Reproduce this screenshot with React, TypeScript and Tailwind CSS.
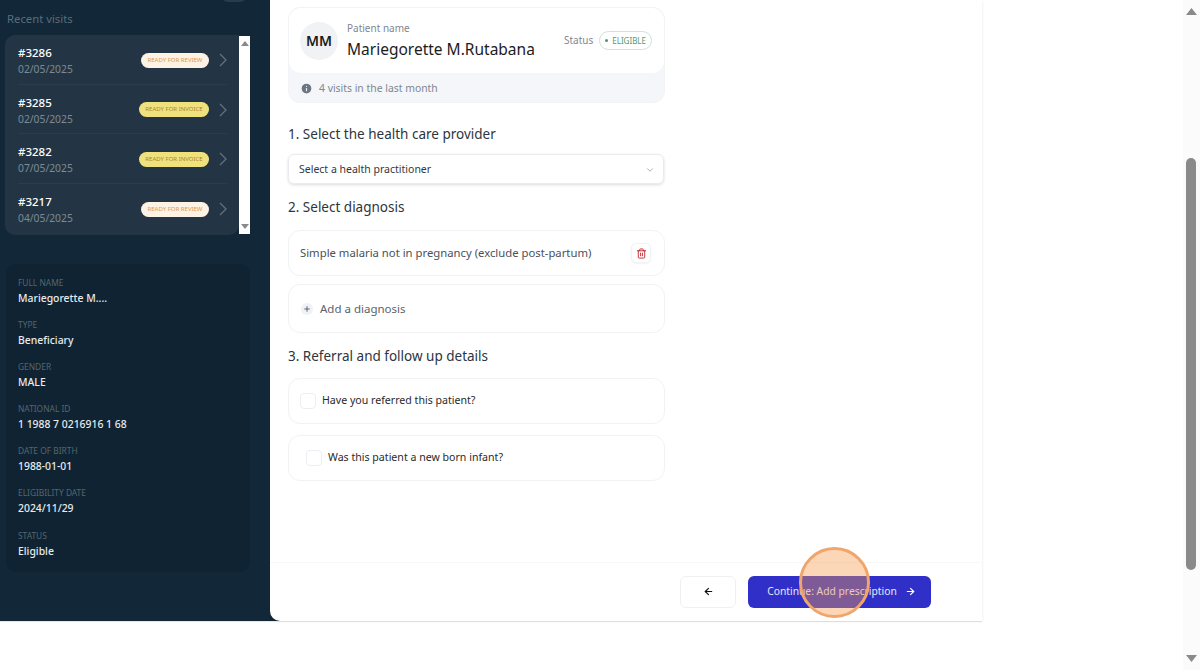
import React from "react";
import { ChevronDown, Info, Trash2, Plus, ArrowLeft, ArrowRight } from "lucide-react";

const visits = [
    { id: "#3286", date: "02/05/2025", status: "review" },
    { id: "#3285", date: "02/05/2025", status: "invoice" },
    { id: "#3282", date: "07/05/2025", status: "invoice" },
    { id: "#3217", date: "04/05/2025", status: "review" },
];

const details = [
    { label: "FULL NAME", value: "Mariegorette M...." },
    { label: "TYPE", value: "Beneficiary" },
    { label: "GENDER", value: "MALE" },
    { label: "NATIONAL ID", value: "1 1988 7 0216916 1 68" },
    { label: "DATE OF BIRTH", value: "1988-01-01" },
    { label: "ELIGIBILITY DATE", value: "2024/11/29" },
    { label: "STATUS", value: "Eligible" },
];

function Sidebar() {
    return (
        <aside className="relative h-full w-[272px] shrink-0 bg-[#122738] pl-[5px] pt-[11px]">
            {/* avatar edge peeking in from above */}
            <div className="absolute left-[222px] top-[-10px] h-[12px] w-[24px] rounded-full bg-[#2a3b49]" />

            <p className="ml-[2px] text-[11.3px] leading-[16px] text-[#5b6c7a]">Recent visits</p>

            {/* recent visits list */}
            <div className="mt-[8px] flex h-[200px] w-[245px]">
                <ul className="h-full w-[234px] rounded-l-[10px] rounded-br-[10px] bg-[#233544] pl-[13px] pr-[12px]">
                    {visits.map((v, i) => (
                        <li
                            key={v.id}
                            className={`flex h-[49.6px] items-center justify-between border-b ${i < 3 ? "border-[#2b3d4c]" : "border-transparent"}`}
                        >
                            <div className="pt-[4px]">
                                <p className="text-[11.5px] leading-[17px] font-medium text-white">{v.id}</p>
                                <p className="text-[10.3px] leading-[17px] text-[#7d8a95]">{v.date}</p>
                            </div>
                            <div className="flex items-center gap-[10px] pt-[2px]">
                                {v.status === "review" ? (
                                    <span className="flex h-[15px] w-[68px] items-center justify-center rounded-full bg-[#fdf2e3] text-[6px] text-[#dc9a45]">
                                        READY FOR REVIEW
                                    </span>
                                ) : (
                                    <span className="flex h-[15px] w-[70px] items-center justify-center rounded-full bg-[#efe27c] text-[6px] text-[#b0862a]">
                                        READY FOR INVOICE
                                    </span>
                                )}
                                <svg width="8" height="14" viewBox="0 0 8 14" fill="none" stroke="#5f707e" strokeWidth="1.3">
                                    <path d="M1 1l6 6-6 6" />
                                </svg>
                            </div>
                        </li>
                    ))}
                </ul>

                {/* list scrollbar */}
                <div className="mt-px flex h-[198px] w-[11px] flex-col items-center justify-between bg-white py-[5px]">
                    <div className="h-0 w-0 border-x-[4px] border-b-[5px] border-x-transparent border-b-[#8a8a8a]" />
                    <div className="h-0 w-0 border-x-[4px] border-t-[5px] border-x-transparent border-t-[#8a8a8a]" />
                </div>
            </div>

            {/* patient details */}
            <div className="ml-px mt-[29px] flex h-[308px] w-[244px] flex-col gap-[15.1px] rounded-[10px] bg-[#102332] px-[12px] pt-[13px]">
                {details.map((d) => (
                    <div key={d.label}>
                        <p className="text-[8.4px] leading-[12px] text-[#55666f]">{d.label}</p>
                        <p className="mt-[3px] text-[10.4px] leading-[12px] font-medium text-[#e6ebee]">{d.value}</p>
                    </div>
                ))}
            </div>
        </aside>
    );
}

function PatientCard() {
    return (
        <div className="h-[96px] rounded-[12px] border border-[#f1f3f6] bg-[#f4f6fa]">
            <div className="flex h-[65px] items-center rounded-[12px] bg-white pl-[11px] pr-[12px]">
                <div className="flex h-[38px] w-[38px] items-center justify-center rounded-full bg-[#f1f2f3] text-[14px] font-semibold text-[#1a1a1a]">
                    MM
                </div>
                <div className="ml-[9px]">
                    <p className="text-[10px] leading-[14px] text-[#7f8790]">Patient name</p>
                    <p className="mt-[3px] text-[15.5px] leading-[22px] text-[#1c1c1c]">Mariegorette M.Rutabana</p>
                </div>
                <div className="ml-auto flex items-center gap-[6px]">
                    <span className="text-[10px] text-[#7f8790]">Status</span>
                    <span className="flex h-[19px] items-center gap-[4px] rounded-full border border-[#cfe3d8] px-[5px] text-[8px] text-[#4f9d72]">
                        <span className="h-[3px] w-[3px] rounded-full bg-[#3f9d6c]" />
                        ELIGIBLE
                    </span>
                </div>
            </div>
            <div className="flex items-center gap-[6px] pl-[11px] pt-[8px]">
                <Info className="h-[13px] w-[13px] fill-[#6b7682] text-[#f4f6fa]" strokeWidth={2} />
                <span className="text-[10.4px] text-[#7f8790]">4 visits in the last month</span>
            </div>
        </div>
    );
}

function Heading({ children }: { children: React.ReactNode }) {
    return <h2 className="text-[13.5px] leading-[20px] text-[#2c3540]">{children}</h2>;
}

function Checkbox({ label, indent }: { label: string; indent?: boolean }) {
    return (
        <div className={`flex h-[46px] items-center gap-[6px] rounded-[12px] border border-[#f1f2f4] ${indent ? "pl-[17px]" : "pl-[11px]"}`}>
            <span className="h-[16px] w-[16px] rounded-[4px] border border-[#eceef1]" />
            <span className="text-[10.6px] text-[#2a2a2a]">{label}</span>
        </div>
    );
}

function Form() {
    return (
        <div className="ml-[18px] w-[377px] pt-[7px]">
            <PatientCard />

            <div className="mt-[21px]"><Heading>1. Select the health care provider</Heading></div>
            <div className="mt-[10px] flex h-[30px] w-[376px] items-center justify-between rounded-[6px] border border-[#e9ebee] pl-[10px] pr-[8px] pt-[1px] shadow-[0_1px_3px_rgba(0,0,0,0.14)]">
                <span className="text-[10.5px] text-[#33383d]">Select a health practitioner</span>
                <ChevronDown className="h-[10px] w-[10px] text-[#9aa1a8]" />
            </div>

            <div className="mt-[13px]"><Heading>2. Select diagnosis</Heading></div>
            <div className="mt-[13px] flex h-[46px] items-center justify-between rounded-[12px] border border-[#f1f2f4] pl-[11px] pr-[13px]">
                <span className="text-[11.3px] text-[#4b5159]">Simple malaria not in pregnancy (exclude post-partum)</span>
                <span className="flex h-[20px] w-[20px] items-center justify-center rounded-[5px] border border-[#f1f2f4] shadow-[0_1px_2px_rgba(0,0,0,0.06)]">
                    <Trash2 className="h-[11px] w-[11px] text-[#c0262d]" strokeWidth={2} />
                </span>
            </div>
            <div className="mt-[8px] flex h-[49px] items-center gap-[7px] rounded-[12px] border border-[#f1f2f4] pl-[12px]">
                <span className="flex h-[12px] w-[12px] items-center justify-center rounded-full bg-[#f0f2f6]">
                    <Plus className="h-[8px] w-[8px] text-[#4b5159]" strokeWidth={2.5} />
                </span>
                <span className="text-[11.5px] text-[#5b626a]">Add a diagnosis</span>
            </div>

            <div className="mt-[13px]"><Heading>3. Referral and follow up details</Heading></div>
            <div className="mt-[12px]"><Checkbox label="Have you referred this patient?" /></div>
            <div className="mt-[11px]"><Checkbox label="Was this patient a new born infant?" indent /></div>
        </div>
    );
}

export default function App() {
    return (
        <div className="flex h-[670px] w-[1200px] overflow-hidden bg-white font-['Noto_Sans',sans-serif]">
            <div className="w-[1183px]">
                <div className="relative flex h-[622px] w-[982px] border-b border-[#e4e6e8] bg-[#122738]">
                    <Sidebar />
                    <main className="absolute bottom-0 left-[270px] right-0 top-0 flex flex-col justify-between rounded-bl-[10px] bg-white shadow-[1px_1px_3px_rgba(0,0,0,0.05)]">
                        <Form />

                        {/* footer actions */}
                        <div className="relative flex h-[59px] items-start justify-end gap-[12px] border-t border-[#f7f7f8] pr-[51px] pt-[13px]">
                            <button className="flex h-[32px] w-[56px] items-center justify-center rounded-[6px] border border-[#eff0f2] text-[#111]">
                                <ArrowLeft className="-mt-[2px] h-[11px] w-[11px]" strokeWidth={2.5} />
                            </button>
                            <button className="flex h-[32px] w-[183px] items-center justify-center gap-[8px] rounded-[6px] bg-[#3030c8] pl-[4px] text-[10.3px] text-[#e8e8fa]">
                                Continue: Add prescription
                                <ArrowRight className="-mt-[2px] h-[11px] w-[11px] text-white" strokeWidth={2.5} />
                            </button>
                            {/* click highlight */}
                            <div className="absolute left-[529px] top-[-16px] h-[71px] w-[71px] rounded-full border-[3px] border-[#f0a56c] bg-[#f59a4e]/40" />
                        </div>
                    </main>
                </div>
            </div>

            {/* page scrollbar */}
            <div className="relative flex h-full w-[17px] shrink-0 flex-col items-center justify-between bg-[#fbfbfb] py-[8px]">
                <svg width="11" height="7" viewBox="0 0 11 7" fill="#8a8a8a"><path d="M5.5 0L11 7H0z" /></svg>
                <div className="absolute left-[3px] top-[158px] h-[412px] w-[10px] rounded-full bg-[#8a8a8a]" />
                <svg width="11" height="7" viewBox="0 0 11 7" fill="#8a8a8a"><path d="M0 0h11L5.5 7z" /></svg>
            </div>
        </div>
    );
}
